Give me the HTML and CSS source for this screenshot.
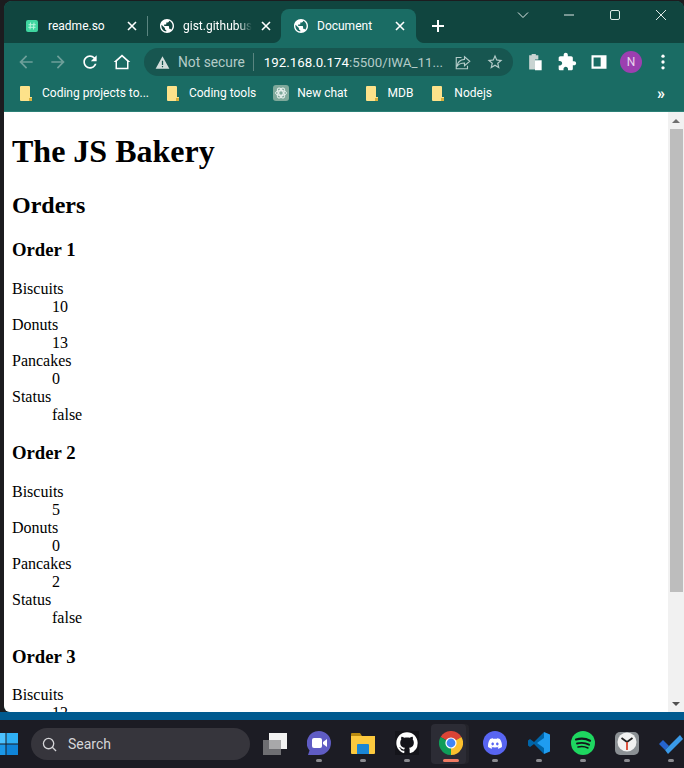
FILE: index.html
```html
<!DOCTYPE html>
<html lang="en">

<head>
    <meta charset="UTF-8">
    <meta name="viewport" content="width=device-width, initial-scale=1.0">
    <title>The JS Bakery</title>
    <link rel="stylesheet" href="styles.css">
</head>

<body>
    <div class="window">
        <div class="tabstrip">
            <div class="tab tab-first">
                <svg class="favicon-so" viewBox="0 0 12 12">
                    <rect width="12" height="12" rx="2" fill="#3fd6a0" />
                    <path d="M4.5 2.5 4 9.5M8 2.5 7.5 9.5M2.5 4.7h7.2M2.3 7.3h7.2" stroke="#b8f5dd" stroke-width="1" fill="none" />
                </svg>
                <span class="tab-title">readme.so</span>
                <svg class="tab-close" viewBox="0 0 10 10"><path d="M1 1l8 8M9 1l-8 8" /></svg>
            </div>
            <div class="tab tab-second">
                <svg class="favicon" viewBox="2 2 20 20"><path d="M12 2C6.48 2 2 6.48 2 12s4.48 10 10 10 10-4.48 10-10S17.52 2 12 2zm-1 17.93c-3.95-.49-7-3.85-7-7.93 0-.62.08-1.21.21-1.79L9 15v1c0 1.1.9 2 2 2v1.93zm6.9-2.54c-.26-.81-1-1.39-1.9-1.39h-1v-3c0-.55-.45-1-1-1H8v-2h2c.55 0 1-.45 1-1V7h2c1.1 0 2-.9 2-2v-.41c2.93 1.19 5 4.06 5 7.41 0 2.08-.8 3.97-2.1 5.39z" /></svg>
                <span class="tab-title tab-fade">gist.githubus</span>
                <svg class="tab-close" viewBox="0 0 10 10"><path d="M1 1l8 8M9 1l-8 8" /></svg>
            </div>
            <div class="tab tab-active">
                <svg class="favicon" viewBox="2 2 20 20"><path d="M12 2C6.48 2 2 6.48 2 12s4.48 10 10 10 10-4.48 10-10S17.52 2 12 2zm-1 17.93c-3.95-.49-7-3.85-7-7.93 0-.62.08-1.21.21-1.79L9 15v1c0 1.1.9 2 2 2v1.93zm6.9-2.54c-.26-.81-1-1.39-1.9-1.39h-1v-3c0-.55-.45-1-1-1H8v-2h2c.55 0 1-.45 1-1V7h2c1.1 0 2-.9 2-2v-.41c2.93 1.19 5 4.06 5 7.41 0 2.08-.8 3.97-2.1 5.39z" /></svg>
                <span class="tab-title">Document</span>
                <svg class="tab-close" viewBox="0 0 10 10"><path d="M1 1l8 8M9 1l-8 8" /></svg>
            </div>
            <svg class="new-tab" viewBox="0 0 12 12"><path d="M6 0v12M0 6h12" /></svg>
            <div class="win-controls">
                <div class="win-btn"><svg viewBox="0 0 12 12"><path d="M1 3.5l5 5 5-5" /></svg></div>
                <div class="win-btn"><svg viewBox="0 0 12 12"><path d="M1 6h10" /></svg></div>
                <div class="win-btn"><svg viewBox="0 0 12 12"><rect x="1.5" y="1.5" width="9" height="9" rx="1.5" /></svg></div>
                <div class="win-btn"><svg viewBox="0 0 12 12"><path d="M1 1l10 10M11 1L1 11" /></svg></div>
            </div>
        </div>

        <div class="toolbar">
            <div class="tool dim"><svg viewBox="0 0 24 24"><path d="M20 11H7.83l5.59-5.59L12 4l-8 8 8 8 1.41-1.41L7.83 13H20z" /></svg></div>
            <div class="tool dim"><svg viewBox="0 0 24 24"><path d="M4 11h12.17l-5.59-5.59L12 4l8 8-8 8-1.41-1.41L16.17 13H4z" /></svg></div>
            <div class="tool"><svg viewBox="0 0 24 24"><path d="M17.65 6.35C16.2 4.9 14.21 4 12 4c-4.42 0-7.99 3.58-7.99 8s3.57 8 7.99 8c3.73 0 6.84-2.55 7.73-6h-2.08c-.82 2.33-3.04 4-5.65 4-3.31 0-6-2.69-6-6s2.69-6 6-6c1.66 0 3.14.69 4.22 1.78L13 11h7V4l-2.35 2.35z" /></svg></div>
            <div class="tool"><svg viewBox="0 0 24 24"><path d="M12 5.7l6 5.4V19H6v-7.900zM12 3L2 12h2.200v8.800h15.600V12H22z" /></svg></div>

            <div class="omnibox">
                <svg class="warn" viewBox="0 0 24 24"><path fill-rule="evenodd" d="M1 22h22L12 2zM11 9h2v7h-2zM11 17.500h2v2h-2z" /></svg>
                <span class="not-secure">Not secure</span>
                <span class="omni-sep"></span>
                <span class="url"><b>192.168.0.174</b>:5500/IWA_11...</span>
                <div class="omni-actions">
                    <div class="tool small"><svg viewBox="0 0 24 24"><path class="line" d="M14 5l7 6-7 6v-3.600c-5 0-8 1.500-10 4.600 .5-5 3-9 10-9.500zM10 6H3v15h15v-4" /></svg></div>
                    <div class="tool small"><svg viewBox="0 0 24 24"><path d="M22 9.240l-7.190-.62L12 2 9.190 8.630 2 9.240l5.460 4.730L5.820 21 12 17.270 18.180 21l-1.630-7.030L22 9.240zM12 15.400l-3.760 2.270 1-4.280-3.320-2.880 4.380-.38L12 6.100l1.710 4.040 4.380.38-3.320 2.880 1 4.280L12 15.400z" /></svg></div>
                </div>
            </div>

            <div class="tool-group">
                <div class="tool"><svg viewBox="0 0 24 24"><path fill="#c9d4d2" d="M5 4h3V2.500h5V4h3v5h-4v12H5z" /><path d="M12 10h8v12h-8z" fill="#ffffff" /></svg></div>
                <div class="tool"><svg viewBox="0 0 24 24"><path d="M20.500 11H19V7c0-1.100-.9-2-2-2h-4V3.500C13 2.120 11.880 1 10.500 1S8 2.120 8 3.500V5H4c-1.100 0-1.990.9-1.990 2v3.800H3.500c1.490 0 2.700 1.210 2.700 2.700s-1.210 2.700-2.700 2.700H2V20c0 1.100.9 2 2 2h3.800v-1.500c0-1.490 1.210-2.700 2.700-2.700 1.490 0 2.700 1.210 2.700 2.700V22H17c1.100 0 2-.9 2-2v-4h1.500c1.380 0 2.500-1.120 2.500-2.500S21.880 11 20.500 11z" /></svg></div>
                <div class="tool"><svg viewBox="0 0 24 24"><path fill-rule="evenodd" d="M3 4h18v16H3zM5.500 6.500v11H14v-11z" /></svg></div>
                <div class="tool"><span class="avatar">N</span></div>
                <div class="tool"><svg viewBox="0 0 24 24"><circle cx="12" cy="5" r="2" /><circle cx="12" cy="12" r="2" /><circle cx="12" cy="19" r="2" /></svg></div>
            </div>
        </div>

        <div class="bookmarks">
            <div class="mark">
                <svg class="mark-icon" viewBox="0 0 12 15"><path class="folder" d="M0 1a1 1 0 011-1h8a1 1 0 011 1v10l2 0v3a1 1 0 01-1 1H1a1 1 0 01-1-1z" /><path class="fold" d="M9 12h3v3H9z" /></svg>
                <span>Coding projects to...</span>
            </div>
            <div class="mark">
                <svg class="mark-icon" viewBox="0 0 12 15"><path class="folder" d="M0 1a1 1 0 011-1h8a1 1 0 011 1v10l2 0v3a1 1 0 01-1 1H1a1 1 0 01-1-1z" /><path class="fold" d="M9 12h3v3H9z" /></svg>
                <span>Coding tools</span>
            </div>
            <div class="mark mark-gpt">
                <svg class="gpt-icon" viewBox="0 0 16 16">
                    <rect width="16" height="16" rx="3" fill="#7fa99b" />
                    <g fill="none" stroke="#e8f1ee" stroke-width=".9">
                        <circle cx="8" cy="8" r="2.200" />
                        <ellipse cx="8" cy="8" rx="5.500" ry="2.600" />
                        <ellipse cx="8" cy="8" rx="5.500" ry="2.600" transform="rotate(60 8 8)" />
                        <ellipse cx="8" cy="8" rx="5.500" ry="2.600" transform="rotate(120 8 8)" />
                    </g>
                </svg>
                <span>New chat</span>
            </div>
            <div class="mark">
                <svg class="mark-icon" viewBox="0 0 12 15"><path class="folder" d="M0 1a1 1 0 011-1h8a1 1 0 011 1v10l2 0v3a1 1 0 01-1 1H1a1 1 0 01-1-1z" /><path class="fold" d="M9 12h3v3H9z" /></svg>
                <span>MDB</span>
            </div>
            <div class="mark mark-last">
                <svg class="mark-icon" viewBox="0 0 12 15"><path class="folder" d="M0 1a1 1 0 011-1h8a1 1 0 011 1v10l2 0v3a1 1 0 01-1 1H1a1 1 0 01-1-1z" /><path class="fold" d="M9 12h3v3H9z" /></svg>
                <span>Nodejs</span>
            </div>
            <span class="more">»</span>
        </div>

        <div class="viewport">
            <div class="content">
                <h1>The JS Bakery</h1>
                <h2>Orders</h2>

                <h3>Order 1</h3>
                <dl>
                    <dt>Biscuits</dt>
                    <dd>10</dd>
                    <dt>Donuts</dt>
                    <dd>13</dd>
                    <dt>Pancakes</dt>
                    <dd>0</dd>
                    <dt>Status</dt>
                    <dd>false</dd>
                </dl>

                <h3>Order 2</h3>
                <dl>
                    <dt>Biscuits</dt>
                    <dd>5</dd>
                    <dt>Donuts</dt>
                    <dd>0</dd>
                    <dt>Pancakes</dt>
                    <dd>2</dd>
                    <dt>Status</dt>
                    <dd>false</dd>
                </dl>

                <h3>Order 3</h3>
                <dl>
                    <dt>Biscuits</dt>
                    <dd>12</dd>
                </dl>
            </div>
            <div class="scrollbar">
                <div class="arrow"><span class="arrow-up"></span></div>
                <div class="thumb"></div>
                <div class="arrow arrow-bottom"><span class="arrow-down"></span></div>
            </div>
        </div>
    </div>

    <div class="taskbar">
        <svg class="start" viewBox="0 0 18 22">
            <path fill="#4cc2ff" d="M-5 0h10.500v10.500H-5z" />
            <path fill="#2fb0f5" d="M6.500 0H18v10.500H6.500z" />
            <path fill="#1b98e8" d="M-5 11.500h10.500V22H-5z" />
            <path fill="#0f84d8" d="M6.500 11.500H18V22H6.500z" />
        </svg>
        <div class="search">
            <svg viewBox="0 0 16 16"><circle cx="7" cy="7" r="5.500" /><path d="M11 11l4 4" /></svg>
            <span>Search</span>
        </div>
        <svg class="task-view" viewBox="0 0 24 22">
            <path fill="#6e6e72" d="M0 7h18v15H0z" />
            <path fill="#f2f2f2" d="M6 0h18v16H6z" />
            <path fill="#a8a8aa" d="M6 7h12v9H6z" />
        </svg>

        <div class="task-slot">
            <svg class="task-icon" viewBox="0 0 24 24">
                <path fill="#5f5cc4" d="M12 0a12 12 0 110 24H1l1.500-4.500A12 12 0 0112 0z" />
                <rect x="5" y="7" width="10" height="10" rx="2" fill="#fff" />
                <path fill="#fff" d="M16 11l4-3v8l-4-3z" />
            </svg>
            <span class="run-dot"></span>
        </div>
        <div class="task-slot">
            <svg class="task-icon" viewBox="0 0 24 24">
                <path fill="#b98a10" d="M0 3a1 1 0 011-1h8l2 3h-11z" />
                <path fill="#fcc93e" d="M0 5h24v17a1 1 0 01-1 1H1a1 1 0 01-1-1z" />
                <path fill="#1a86d6" d="M6 14a1 1 0 011-1h10a1 1 0 011 1v9H6z" />
            </svg>
            <span class="run-dot"></span>
        </div>
        <div class="task-slot">
            <svg class="task-icon" viewBox="-1 -1 18 18">
                <rect x="-1" y="-1" width="18" height="18" fill="#14141a" />
                <path fill="#fff" d="M8 0C3.580 0 0 3.580 0 8c0 3.540 2.290 6.530 5.470 7.590.4.070.55-.17.55-.38 0-.19-.01-.82-.01-1.490-2.010.37-2.530-.49-2.690-.94-.09-.23-.48-.94-.82-1.130-.28-.15-.68-.52-.01-.53.63-.01 1.080.58 1.230.82.72 1.210 1.870.87 2.330.66.070-.52.28-.87.51-1.070-1.780-.2-3.640-.89-3.640-3.950 0-.87.31-1.590.82-2.150-.08-.2-.36-1.020.08-2.120 0 0 .67-.21 2.200.82.64-.18 1.320-.27 2-.27.68 0 1.360.09 2 .27 1.530-1.040 2.200-.82 2.200-.82.44 1.100.16 1.920.08 2.120.51.56.82 1.270.82 2.150 0 3.070-1.870 3.750-3.650 3.950.29.25.54.73.54 1.480 0 1.070-.01 1.930-.01 2.200 0 .21.15.46.55.38A8.013 8.013 0 0016 8c0-4.420-3.580-8-8-8z" />
            </svg>
            <span class="run-dot"></span>
        </div>
        <div class="task-slot task-active">
            <svg class="task-icon" viewBox="0 0 24 24">
                <path fill="#db4437" d="M12 12L22.400 6A12 12 0 001.600 6z" />
                <path fill="#fbc02d" d="M12 12L12 24A12 12 0 0022.400 6z" />
                <path fill="#0f9d58" d="M12 12L1.600 6A12 12 0 0012 24z" />
                <circle cx="12" cy="12" r="5.600" fill="#fff" />
                <circle cx="12" cy="12" r="4.400" fill="#4285f4" />
            </svg>
            <span class="run-bar"></span>
        </div>
        <div class="task-slot">
            <svg class="task-icon" viewBox="0 0 24 24">
                <circle cx="12" cy="12" r="12" fill="#5865f2" />
                <g transform="translate(5 5.500) scale(.583)">
                    <path fill="#fff" d="M20.317 4.370a19.790 19.790 0 00-4.885-1.515.074.074 0 00-.079.037c-.211.375-.445.865-.608 1.250-1.845-.276-3.680-.276-5.487 0-.164-.393-.406-.874-.618-1.250a.077.077 0 00-.079-.037 19.736 19.736 0 00-4.885 1.515.070.070 0 00-.032.028C.533 9.046-.319 13.580.099 18.058a.082.082 0 00.031.056c2.053 1.508 4.041 2.423 5.993 3.029a.078.078 0 00.084-.028c.462-.630.873-1.295 1.226-1.994a.076.076 0 00-.042-.106c-.653-.248-1.274-.549-1.872-.892a.077.077 0 01-.008-.128c.126-.094.252-.192.372-.291a.074.074 0 01.078-.011c3.928 1.793 8.180 1.793 12.061 0a.074.074 0 01.079.010c.120.099.246.198.373.292a.077.077 0 01-.007.128 12.299 12.299 0 01-1.873.891.077.077 0 00-.041.107c.360.698.772 1.363 1.225 1.993a.076.076 0 00.084.029c1.961-.607 3.950-1.522 6.002-3.029a.077.077 0 00.031-.055c.500-5.177-.838-9.674-3.548-13.660a.061.061 0 00-.031-.029zM8.020 15.331c-1.183 0-2.157-1.086-2.157-2.419 0-1.333.956-2.419 2.157-2.419 1.211 0 2.176 1.095 2.157 2.419 0 1.333-.956 2.419-2.157 2.419zm7.975 0c-1.183 0-2.157-1.086-2.157-2.419 0-1.333.955-2.419 2.157-2.419 1.211 0 2.176 1.095 2.157 2.419 0 1.333-.946 2.419-2.157 2.419z" />
                </g>
            </svg>
            <span class="run-dot"></span>
        </div>
        <div class="task-slot">
            <svg class="task-icon" viewBox="0 0 24 24">
                <path fill="#0065a9" d="M17 1L7 11l-4-3-2 1.500v5L3 16l4-3 10 10z" />
                <path fill="#1f9cf0" d="M17 1l6 2.500v17L17 23zM17 7l-7 5 7 5z" fill-rule="evenodd" />
            </svg>
            <span class="run-dot"></span>
        </div>
        <div class="task-slot">
            <svg class="task-icon" viewBox="0 0 24 24">
                <circle cx="12" cy="12" r="12" fill="#1ed760" />
                <g fill="none" stroke="#14141a" stroke-linecap="round">
                    <path stroke-width="2.200" d="M5 8.500c4.500-1.300 10-1 14 1.200" />
                    <path stroke-width="1.900" d="M6 12.500c4-1 8.500-.7 12 1.200" />
                    <path stroke-width="1.500" d="M7 16c3.500-.8 7-.5 10 1" />
                </g>
            </svg>
            <span class="run-dot"></span>
        </div>
        <div class="task-slot">
            <svg class="task-icon" viewBox="0 0 24 24">
                <rect y="1" width="24" height="23" rx="5" fill="#8b9094" />
                <circle cx="12" cy="11" r="9.500" fill="#f1f1f1" />
                <path fill="none" stroke="#222" stroke-width="1.800" d="M12 11L6.500 7M12 11l5.500-4" />
                <path fill="none" stroke="#d8402a" stroke-width="1.800" d="M12 11v8" />
            </svg>
            <span class="run-dot"></span>
        </div>
        <div class="task-slot">
            <svg class="task-icon" viewBox="0 0 24 24">
                <path fill="#2564cf" d="M0 13l4-4 6 6-4 4z" />
                <path fill="#3a9ae8" d="M6 19L21 4l3 4L9 23z" />
            </svg>
            <span class="run-dot"></span>
        </div>
    </div>
</body>

</html>
```

FILE: styles.css
```css
* {
    box-sizing: border-box;
}

html,
body {
    margin: 0;
    padding: 0;
    height: 768px;
    overflow: hidden;
}

body {
    background-color: #1c1c1f;
    display: flex;
    flex-direction: column;
    padding-top: 1px;
    font-family: "Roboto", "Liberation Sans", sans-serif;
}

.window {
    height: 711px;
    margin-left: 4px;
    display: flex;
    flex-direction: column;
    background-color: #1a6c64;
    border-radius: 8px 8px 0 6px;
    overflow: hidden;
    flex-shrink: 0;
}

/* tabs */
.tabstrip {
    height: 42px;
    display: flex;
    background-color: #10453f;
    padding-left: 12px;
    flex-shrink: 0;
}

.tab {
    height: 34px;
    align-self: flex-end;
    display: flex;
    align-items: center;
    color: #ffffff;
    font-size: 12px;
    white-space: nowrap;
}

.tab-first {
    width: 131px;
    padding: 0 10px;
    gap: 10px;
}

.tab-second {
    width: 134px;
    padding: 0 10px 0 12px;
    gap: 9px;
    border-left: 1px solid #5a8580;
    height: 20px;
    margin-bottom: 7px;
}

.tab-active {
    position: relative;
    width: 135px;
    padding: 0 11px 0 13px;
    gap: 9px;
    background-color: #1a6c64;
    border-radius: 8px 8px 0 0;
}

/* the little curves where the active tab meets the toolbar */
.tab-active::before,
.tab-active::after {
    content: "";
    position: absolute;
    bottom: 0;
    width: 8px;
    height: 8px;
}

.tab-active::before {
    left: -8px;
    background: radial-gradient(circle at 0 0, #10453f 7.5px, #1a6c64 8.5px);
}

.tab-active::after {
    right: -8px;
    background: radial-gradient(circle at 100% 0, #10453f 7.5px, #1a6c64 8.5px);
}

.favicon-so {
    width: 12px;
    height: 12px;
    flex-shrink: 0;
}

.favicon {
    width: 14px;
    height: 14px;
    flex-shrink: 0;
    fill: #ffffff;
}

.tab-title {
    flex: 1;
    overflow: hidden;
}

.tab-fade {
    -webkit-mask-image: linear-gradient(to right, #000 80%, transparent);
    mask-image: linear-gradient(to right, #000 80%, transparent);
}

.tab-close {
    width: 10px;
    height: 10px;
    flex-shrink: 0;
    stroke: #ffffff;
    stroke-width: 1.6;
    fill: none;
}

.new-tab {
    width: 12px;
    height: 12px;
    margin: 19px 0 0 16px;
    stroke: #ffffff;
    stroke-width: 2;
    fill: none;
}

.win-controls {
    margin-left: auto;
    display: flex;
    height: 28px;
}

.win-btn {
    width: 46px;
    display: flex;
    align-items: center;
    justify-content: center;
}

.win-btn svg {
    width: 12px;
    height: 12px;
    stroke: #dfe9e7;
    stroke-width: 1;
    fill: none;
}

/* address bar row */
.toolbar {
    height: 38px;
    display: flex;
    align-items: center;
    padding-left: 6px;
    flex-shrink: 0;
}

.tool {
    width: 32px;
    height: 32px;
    display: flex;
    align-items: center;
    justify-content: center;
    flex-shrink: 0;
}

.tool svg {
    width: 20px;
    height: 20px;
    fill: #ffffff;
}

.tool.dim svg {
    fill: #6d9f99;
}

.tool.small svg {
    width: 18px;
    height: 18px;
    fill: #b3cbc8;
}

.tool .line {
    fill: none;
    stroke: #b3cbc8;
    stroke-width: 1.5;
}

.omnibox {
    width: 369px;
    height: 28px;
    margin-left: 6px;
    padding: 0 2px 0 11px;
    display: flex;
    align-items: center;
    background-color: #175650;
    border-radius: 14px;
    font-size: 14px;
    white-space: nowrap;
    flex-shrink: 0;
}

.warn {
    width: 15px;
    height: 15px;
    fill: #d3dedc;
    flex-shrink: 0;
}

.not-secure {
    margin-left: 8px;
    color: #b3cbc8;
    font-size: 13.8px;
}

.omni-sep {
    width: 1px;
    height: 18px;
    margin: 0 10px 0 8px;
    background-color: #5a8580;
    flex-shrink: 0;
}

.url {
    color: #b3cbc8;
    font-size: 13.3px;
}

.url b {
    color: #ffffff;
    font-weight: 400;
}

.omni-actions {
    margin-left: auto;
    display: flex;
}

.tool-group {
    display: flex;
    margin-left: 6px;
}

.avatar {
    width: 22px;
    height: 22px;
    border-radius: 50%;
    background-color: #9c3fb0;
    color: #e8d4ec;
    font-size: 12px;
    display: flex;
    align-items: center;
    justify-content: center;
}

/* bookmarks */
.bookmarks {
    height: 31px;
    display: flex;
    align-items: center;
    padding: 0 0 6px 16px;
    gap: 18px;
    color: #ffffff;
    font-size: 12px;
    border-bottom: 1px solid #2c8076;
    flex-shrink: 0;
}

.mark {
    display: flex;
    align-items: center;
    gap: 10px;
    white-space: nowrap;
}

.mark-gpt {
    gap: 8px;
    margin-left: -1px;
}

.mark-last {
    margin-left: 1px;
}

.mark-icon {
    width: 12px;
    height: 15px;
}

.gpt-icon {
    width: 16px;
    height: 16px;
}

.folder {
    fill: #fde28a;
}

.fold {
    fill: #d8b13e;
}

.more {
    margin-left: auto;
    margin-right: 19px;
    font-size: 16px;
    font-weight: 700;
}

/* page */
.viewport {
    flex: 1;
    display: flex;
    min-height: 0;
    background-color: #ffffff;
}

.content {
    flex: 1;
    padding: 0 8px;
    overflow: hidden;
    color: #000000;
    font-family: "Liberation Serif", "Times New Roman", serif;
    font-size: 16px;
}

.scrollbar {
    width: 16px;
    display: flex;
    flex-direction: column;
    background-color: #f1f1f1;
}

.arrow {
    height: 17px;
    display: flex;
    align-items: center;
    justify-content: center;
}

.arrow-bottom {
    margin-top: auto;
}

.arrow-up {
    border: 4px solid transparent;
    border-top: 0;
    border-bottom: 4px solid #6f6f6f;
}

.arrow-down {
    border: 4px solid transparent;
    border-bottom: 0;
    border-top: 4px solid #505050;
}

.thumb {
    height: 463px;
    margin: 0 1px 0 2px;
    background-color: #bdbdbd;
}

/* blue strip + windows taskbar */
.taskbar {
    height: 48px;
    margin-top: 8px;
    display: flex;
    align-items: center;
    background-color: #1c1c24;
    box-shadow: 0 -8px 0 #005a8f;
    flex-shrink: 0;
}

.start {
    width: 18px;
    height: 22px;
    flex-shrink: 0;
}

.search {
    width: 219px;
    height: 32px;
    margin-left: 13px;
    padding-left: 11px;
    display: flex;
    align-items: center;
    gap: 11px;
    background-color: #36353c;
    border-radius: 16px;
    color: #d5d5d8;
    font-size: 14px;
    flex-shrink: 0;
}

.search svg {
    width: 15px;
    height: 15px;
    fill: none;
    stroke: #d5d5d8;
    stroke-width: 1.4;
}

.task-view {
    width: 24px;
    height: 22px;
    margin: 0 10px 0 13px;
    flex-shrink: 0;
}

.task-slot {
    width: 44px;
    height: 40px;
    display: flex;
    flex-direction: column;
    align-items: center;
    justify-content: flex-end;
    flex-shrink: 0;
}

.task-active {
    width: 35px;
    margin: 0 7px 0 2px;
    padding-left: 5px;
    background-color: #2c2c35;
    border-radius: 4px;
    box-shadow: 3px 0 0 #24242b;
}

.task-icon {
    width: 24px;
    height: 24px;
    margin-bottom: 4px;
}

.run-dot {
    width: 6px;
    height: 3px;
    margin-bottom: 2px;
    border-radius: 2px;
    background-color: #8b8b90;
}

.run-bar {
    width: 16px;
    height: 3px;
    margin-bottom: 2px;
    border-radius: 2px;
    background-color: #f07a62;
}
```
